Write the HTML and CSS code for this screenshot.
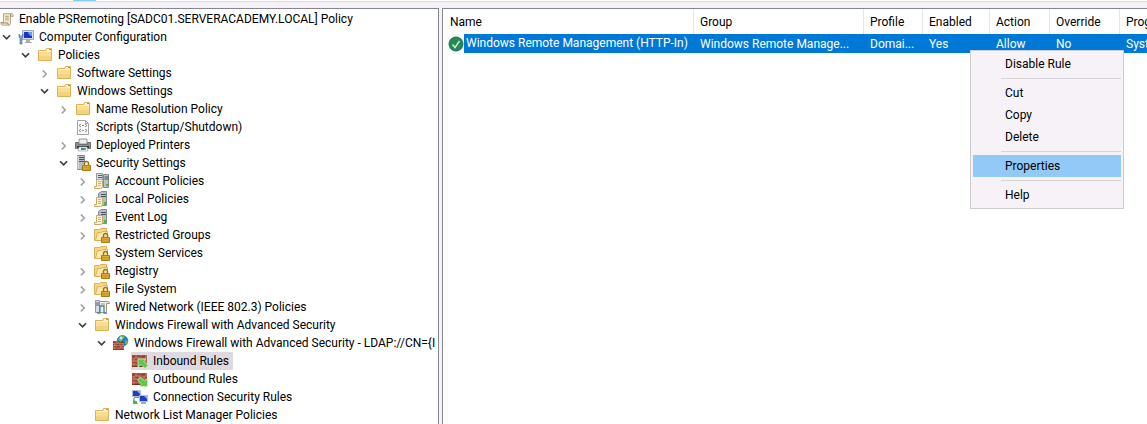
FILE: index.html
```html
<!DOCTYPE html>
<html lang="en">
<head>
    <meta charset="UTF-8">
    <meta name="viewport" content="width=device-width, initial-scale=1.0">
    <title>Group Policy Management Editor</title>
    <link rel="stylesheet" href="styles.css">
</head>
<body>
    <!-- Icon set -->
    <svg class="sprite" aria-hidden="true">
        <symbol id="open" viewBox="0 0 16 16"><path d="M3.500 6l4 4 4-4" fill="none" stroke="#404040" stroke-width="2"/></symbol>
        <symbol id="closed" viewBox="0 0 16 16"><path d="M5.500 5l4 4-4 4" fill="none" stroke="#a6a6a6" stroke-width="1.800"/></symbol>
        <symbol id="scroll" viewBox="0 0 16 16">
            <path d="M4 2h9q2 0 2 2v1h-3v8q0 2-2 2H3q-2 0-2-2v-1h3z" fill="#f3e9c9" stroke="#a99b76"/>
            <path d="M12 5V3.500q0-1.500 1-1.500M1.500 12.500H9v1q0 1 1 1.500" fill="none" stroke="#8d805e"/>
            <path d="M6 5h4M6 7h4M6 9h4" stroke="#a39a80"/>
        </symbol>
        <symbol id="computer" viewBox="0 0 16 16">
            <path d="M4.500 1.500h11v9h-11z" fill="#d9dde4" stroke="#a3a9b5"/>
            <path d="M6 3h8v6H6z" fill="#1437c4"/><path d="M10 3h4v4q-3 0-4-4z" fill="#6d9bf5"/>
            <path d="M8 11h4v2H8zM7 13h7v1H7z" fill="#a6adb8"/>
            <path d="M1 5v3l1 1v6h2V9l1-1V5L4 7H2z" fill="#7fa9cf" stroke="#3e6d99" stroke-width=".6"/>
        </symbol>
        <symbol id="folder" viewBox="0 0 16 16">
            <path d="M1.500 3.500h7l1-2h5v12h-13z" fill="#f8de92" stroke="#d9b25a"/>
            <path d="M10 2h4v1.500h-4z" fill="#fff"/><path d="M12 2h2v1h-2z" fill="#58a2dd"/>
            <path d="M2 4.500h12" stroke="#fdf0c4"/><path d="M2 9h12v4H2z" fill="#eec768" opacity=".5"/>
        </symbol>
        <symbol id="lock" viewBox="0 0 16 16">
            <path d="M9.500 11V8.500a2 2 0 0 1 4 0V11" fill="none" stroke="#a27413" stroke-width="1.500"/>
            <path d="M7.500 10.500h8v5h-8z" fill="#e2ae34" stroke="#a87a18"/><path d="M8 12.500h7M8 14h7" stroke="#c28e20" stroke-width=".7"/>
        </symbol>
        <symbol id="folderlock" viewBox="0 0 16 16">
            <path d="M.5 2.500h5l1-1h6v12H.5z" fill="#f6d77f" stroke="#d9b25a"/>
            <path d="M1.500 13.500l2-8h4l1-1h5v9z" fill="#fae8ae" stroke="#d9b25a"/>
            <use href="#lock"/>
        </symbol>
        <symbol id="script" viewBox="0 0 16 16">
            <path d="M2.500 1.500h8l3 3v11h-11z" fill="#fafafa" stroke="#a3a3a3"/><path d="M10.500 1.500v3h3" fill="none" stroke="#a3a3a3"/>
            <path d="M6 5L4 6.500 6 8M10 5l2 1.500L10 8M6 10l-2 1.500L6 13M10 10l2 1.500-2 1.500M7 6.500h2M7 11.500h2" fill="none" stroke="#707070" stroke-width=".8"/>
        </symbol>
        <symbol id="printer" viewBox="0 0 16 16">
            <path d="M4 2h8v5H4z" fill="#ededf0" stroke="#999"/>
            <path d="M.5 5.500h3v2h9v-2h3v6H.5z" fill="#8b8f95" stroke="#6d7075"/>
            <path d="M2 9h12v2H2z" fill="#37393d"/><path d="M4 10h8l1 4H3z" fill="#f2f5f8" stroke="#999" stroke-width=".6"/>
            <path d="M6 11h3v2H6z" fill="#248bc2"/><path d="M9 11h2v2H9z" fill="#4bb7a6"/>
        </symbol>
        <symbol id="server" viewBox="0 0 16 16">
            <path d="M5.500.5h7v14h-7z" fill="#b5bec8" stroke="#808b97"/>
            <path d="M7 2.500h5M7 4.500h5M7 6.500h5" stroke="#4b5660"/><path d="M6 1v13" stroke="#e7ecf0"/>
        </symbol>
        <symbol id="security" viewBox="0 0 16 16">
            <g transform="translate(-3)"><use href="#server"/></g><use href="#lock"/>
        </symbol>
        <symbol id="note" viewBox="0 0 16 16">
            <path d="M2.500 6.500h6v7q0 2-2 2h-6v-2h2z" fill="#fbf0cf" stroke="#c9ab68"/>
            <path d="M4 8.500h3M4 10.500h3M4 12.500h3" stroke="#b8a475" stroke-width=".8"/>
        </symbol>
        <symbol id="account" viewBox="0 0 16 16">
            <path d="M2.500.5h6v12h-6z" fill="#d5dce2" stroke="#8e99a4"/><path d="M4 2.500h4M4 4.500h4" stroke="#54616e"/>
            <path d="M9.500 1.500h5v13h-5z" fill="#b9c3cc" stroke="#7f8b96"/><path d="M10.500 4h4M10.500 6h4" stroke="#44515e"/>
            <path d="M12 11h2v2h-2z" fill="#39c52f"/><use href="#note"/>
        </symbol>
        <symbol id="policy" viewBox="0 0 16 16">
            <path d="M4.500 2.500l3-2h5v14h-8z" fill="#b5bec8" stroke="#808b97"/><path d="M7 3.500h5M7 5.500h5" stroke="#4b5660"/>
            <path d="M10 11h2v3h-2z" fill="#39c52f"/><use href="#note"/>
        </symbol>
        <symbol id="wired" viewBox="0 0 16 16">
            <path d="M1.500 1.500h4v12h-4z" fill="#d5dce2" stroke="#8e99a4"/><path d="M2 4h3M2 6h3" stroke="#54616e"/>
            <path d="M5.500 2.500h9q1 0 1 2h-3v8q0 1-2 1h-5z" fill="#f4efe0" stroke="#9f987f"/>
            <path d="M3 14h3V7h4v7h3" fill="none" stroke="#4b87a4" stroke-width="1.300"/><path d="M7 5h4" stroke="#999"/>
        </symbol>
        <symbol id="bricks" viewBox="0 0 16 16">
            <path d="M0 2h15v12H0z" fill="#a64b36"/>
            <path d="M0 5h15M0 8h15M0 11h15M4 2v3M9 2v3M14 2v3M2 5v3M7 5v3M12 5v3M4 8v3M9 8v3M14 8v3M2 11v3M7 11v3M12 11v3" stroke="#cf9179" stroke-width=".8"/>
            <path d="M0 4h3M5 7h2M8 4h5M3 10h5M0 13.500h15" stroke="#702a1d" stroke-width=".8"/>
        </symbol>
        <symbol id="firewall" viewBox="0 0 16 16">
            <circle cx="9.500" cy="5.800" r="5.300" fill="#2779cb" stroke="#1b5496" stroke-width=".6"/>
            <path d="M8 1q3-1 4 1l-2 2-2 3-3-2q1-3 3-4zM12 5l3 1-1 4-2-1z" fill="#63bb4c"/><circle cx="8" cy="3" r="1.500" fill="#cbe9f6"/>
            <svg x="0" y="6" width="11" height="9" viewBox="0 2 13 12" preserveAspectRatio="none"><use href="#bricks" width="16" height="16"/></svg>
        </symbol>
        <symbol id="inbound" viewBox="0 0 16 16">
            <use href="#bricks"/><path d="M6 6h8l-2 2.500 4 4-3 3-4-4L6 14z" fill="#55cc43" stroke="#d3f1c5" stroke-width=".8"/>
        </symbol>
        <symbol id="outbound" viewBox="0 0 16 16">
            <use href="#bricks"/><path d="M15.500 15.500h-8l2-2.500-4-4 3-3 4 4 3-2.500z" fill="#55cc43" stroke="#d3f1c5" stroke-width=".8"/>
        </symbol>
        <symbol id="connection" viewBox="0 0 16 16">
            <path d="M.5 1.500h8v6h-8z" fill="#1d3fc6" stroke="#b5bcc9"/><path d="M5 2h3v3z" fill="#8eb0fa"/><path d="M2 8.500h5" stroke="#8790a0"/>
            <path d="M7.500 6.500h8v6h-8z" fill="#1d3fc6" stroke="#b5bcc9"/><path d="M12 7h3v3z" fill="#8eb0fa"/><path d="M9 14h5" stroke="#a3abb8" stroke-width="2"/>
            <path d="M2 9v4h3" fill="none" stroke="#5e6c7a"/><path d="M1 11l3 1 2 3H1z" fill="#54b647"/>
        </symbol>
        <symbol id="check" viewBox="0 0 16 16">
            <circle cx="8" cy="8" r="7" fill="#27894a" stroke="#176b72"/><path d="M4.500 8.500l2.500 3L11.500 5" fill="none" stroke="#cfeee0" stroke-width="1.400"/>
        </symbol>
    </svg>

    <div class="window">
        <div class="toolbar"><span class="toolbar-active"></span></div>
        <main class="panes">
            <nav class="tree" aria-label="Console tree">
                <div class="row root"><a href="#"><svg class="icon"><use href="#scroll"/></svg>Enable PSRemoting [SADC01.SERVERACADEMY.LOCAL] Policy</a></div>
                <ul>
                    <li>
                        <div class="row"><button class="toggle" aria-label="Collapse"><svg class="icon"><use href="#open"/></svg></button><a href="#"><svg class="icon"><use href="#computer"/></svg>Computer Configuration</a></div>
                        <ul>
                            <li>
                                <div class="row"><button class="toggle" aria-label="Collapse"><svg class="icon"><use href="#open"/></svg></button><a href="#"><svg class="icon"><use href="#folder"/></svg>Policies</a></div>
                                <ul>
                                    <li><div class="row"><button class="toggle" aria-label="Expand"><svg class="icon"><use href="#closed"/></svg></button><a href="#"><svg class="icon"><use href="#folder"/></svg>Software Settings</a></div></li>
                                    <li>
                                        <div class="row"><button class="toggle" aria-label="Collapse"><svg class="icon"><use href="#open"/></svg></button><a href="#"><svg class="icon"><use href="#folder"/></svg>Windows Settings</a></div>
                                        <ul>
                                            <li><div class="row"><button class="toggle" aria-label="Expand"><svg class="icon"><use href="#closed"/></svg></button><a href="#"><svg class="icon"><use href="#folder"/></svg>Name Resolution Policy</a></div></li>
                                            <li><div class="row leaf"><a href="#"><svg class="icon"><use href="#script"/></svg>Scripts (Startup/Shutdown)</a></div></li>
                                            <li><div class="row"><button class="toggle" aria-label="Expand"><svg class="icon"><use href="#closed"/></svg></button><a href="#"><svg class="icon"><use href="#printer"/></svg>Deployed Printers</a></div></li>
                                            <li>
                                                <div class="row"><button class="toggle" aria-label="Collapse"><svg class="icon"><use href="#open"/></svg></button><a href="#"><svg class="icon"><use href="#security"/></svg>Security Settings</a></div>
                                                <ul>
                                                    <li><div class="row"><button class="toggle" aria-label="Expand"><svg class="icon"><use href="#closed"/></svg></button><a href="#"><svg class="icon"><use href="#account"/></svg>Account Policies</a></div></li>
                                                    <li><div class="row"><button class="toggle" aria-label="Expand"><svg class="icon"><use href="#closed"/></svg></button><a href="#"><svg class="icon"><use href="#policy"/></svg>Local Policies</a></div></li>
                                                    <li><div class="row"><button class="toggle" aria-label="Expand"><svg class="icon"><use href="#closed"/></svg></button><a href="#"><svg class="icon"><use href="#policy"/></svg>Event Log</a></div></li>
                                                    <li><div class="row"><button class="toggle" aria-label="Expand"><svg class="icon"><use href="#closed"/></svg></button><a href="#"><svg class="icon"><use href="#folderlock"/></svg>Restricted Groups</a></div></li>
                                                    <li><div class="row leaf"><a href="#"><svg class="icon"><use href="#folderlock"/></svg>System Services</a></div></li>
                                                    <li><div class="row"><button class="toggle" aria-label="Expand"><svg class="icon"><use href="#closed"/></svg></button><a href="#"><svg class="icon"><use href="#folderlock"/></svg>Registry</a></div></li>
                                                    <li><div class="row"><button class="toggle" aria-label="Expand"><svg class="icon"><use href="#closed"/></svg></button><a href="#"><svg class="icon"><use href="#folderlock"/></svg>File System</a></div></li>
                                                    <li><div class="row"><button class="toggle" aria-label="Expand"><svg class="icon"><use href="#closed"/></svg></button><a href="#"><svg class="icon"><use href="#wired"/></svg>Wired Network (IEEE 802.3) Policies</a></div></li>
                                                    <li>
                                                        <div class="row"><button class="toggle" aria-label="Collapse"><svg class="icon"><use href="#open"/></svg></button><a href="#"><svg class="icon"><use href="#folder"/></svg>Windows Firewall with Advanced Security</a></div>
                                                        <ul>
                                                            <li>
                                                                <div class="row"><button class="toggle" aria-label="Collapse"><svg class="icon"><use href="#open"/></svg></button><a href="#"><svg class="icon"><use href="#firewall"/></svg>Windows Firewall with Advanced Security - LDAP://CN={I</a></div>
                                                                <ul>
                                                                    <li><div class="row leaf"><a href="#" class="selected"><svg class="icon"><use href="#inbound"/></svg>Inbound Rules</a></div></li>
                                                                    <li><div class="row leaf"><a href="#"><svg class="icon"><use href="#outbound"/></svg>Outbound Rules</a></div></li>
                                                                    <li><div class="row leaf"><a href="#"><svg class="icon"><use href="#connection"/></svg>Connection Security Rules</a></div></li>
                                                                </ul>
                                                            </li>
                                                        </ul>
                                                    </li>
                                                    <li><div class="row leaf"><a href="#"><svg class="icon"><use href="#folder"/></svg>Network List Manager Policies</a></div></li>
                                                </ul>
                                            </li>
                                        </ul>
                                    </li>
                                </ul>
                            </li>
                        </ul>
                    </li>
                </ul>
            </nav>

            <section class="list">
                <table>
                    <colgroup>
                        <col class="col-name"><col class="col-group"><col class="col-profile"><col class="col-enabled"><col class="col-action"><col class="col-override"><col class="col-program">
                    </colgroup>
                    <thead>
                        <tr><th>Name</th><th>Group</th><th>Profile</th><th>Enabled</th><th>Action</th><th>Override</th><th>Program</th></tr>
                    </thead>
                    <tbody>
                        <tr>
                            <td class="name"><div class="name-cell"><svg class="icon"><use href="#check"/></svg><span>Windows Remote Management (HTTP-In)</span></div></td>
                            <td>Windows Remote Manage...</td>
                            <td>Domai...</td>
                            <td>Yes</td>
                            <td>Allow</td>
                            <td>No</td>
                            <td>System</td>
                        </tr>
                    </tbody>
                </table>

                <div class="menu" role="menu">
                    <button role="menuitem">Disable Rule</button>
                    <hr>
                    <button role="menuitem">Cut</button>
                    <button role="menuitem">Copy</button>
                    <button role="menuitem">Delete</button>
                    <hr>
                    <button role="menuitem" class="active">Properties</button>
                    <hr>
                    <button role="menuitem">Help</button>
                </div>
            </section>
        </main>
    </div>
</body>
</html>
```
FILE: styles.css
```css
* {
    box-sizing: border-box;
}

body {
    margin: 0;
    font-family: "Segoe UI", Roboto, "Open Sans", sans-serif;
    font-size: 12px;
    line-height: 18px;
    color: #000;
    background: #f6f2f7;
    overflow: hidden;
}

.sprite {
    display: none;
}

button {
    font: inherit;
    color: inherit;
    background: none;
    border: none;
    padding: 0;
}

.window {
    display: flex;
    flex-direction: column;
    height: 100vh;
}

.toolbar {
    flex: none;
    height: 8px;
    background: linear-gradient(#fff 1px, #dcdcdc 1px, #dcdcdc 2px, #f6f2f7 2px);
}

.toolbar-active {
    display: block;
    width: 23px;
    height: 1px;
    margin-left: 73px;
    background: #84cdf5;
}

.panes {
    flex: 1;
    min-height: 0;
    display: flex;
    gap: 3px;
}

.tree {
    flex: 0 0 439px;
    padding-top: 1px;
    background: #fff;
    border: solid #828790;
    border-width: 1px 1px 0 0;
    overflow: hidden;
    white-space: nowrap;
}

.tree ul {
    list-style: none;
    margin: 0;
    padding: 0;
}

.tree ul ul {
    padding-left: 19px;
}

.row {
    display: flex;
    height: 18px;
}

.row a {
    display: flex;
    align-items: center;
    gap: 5px;
    padding: 0 4px 0 1px;
    color: inherit;
    text-decoration: none;
}

.row.leaf {
    padding-left: 17px;
}

.row a.selected {
    background: #dfdadf;
}

.toggle {
    display: flex;
    align-items: center;
    width: 17px;
    flex: none;
}

.toggle .icon {
    width: 14px;
}

.icon {
    width: 16px;
    height: 16px;
    flex: none;
}

.root a {
    padding-left: 0;
}

.root .icon {
    width: 14px;
}

.list {
    position: relative;
    flex: 1;
    min-width: 0;
    background: #fff;
    border: solid #828790;
    border-width: 1px 0 0 1px;
    overflow: hidden;
}

table {
    table-layout: fixed;
    width: 797px;
    border-collapse: collapse;
}

.col-name { width: 251px; }
.col-group { width: 170px; }
.col-profile { width: 59px; }
.col-enabled { width: 67px; }
.col-action { width: 60px; }
.col-override { width: 70px; }
.col-program { width: 120px; }

th, td {
    padding: 0 0 0 6px;
    text-align: left;
    font-weight: normal;
    white-space: nowrap;
    overflow: hidden;
}

th {
    height: 25px;
    box-shadow: inset -1px 0 #e5e5e5;
}

th:first-child {
    padding-left: 7px;
}

td {
    height: 19px;
    color: #fff;
    background: #0078d7;
}

td.name {
    padding-left: 5px;
    background: none;
}

.name-cell {
    display: flex;
    align-items: center;
}

.name-cell span {
    flex: 1;
    line-height: 19px;
    padding-left: 2px;
    background: #0078d7;
}

.menu {
    position: absolute;
    top: 41px;
    left: 527px;
    width: 154px;
    padding: 2px;
    background: #f6f2f7;
    border: 1px solid #ccc;
}

.menu button {
    display: block;
    width: 100%;
    height: 22px;
    padding-left: 32px;
    text-align: left;
}

.menu .active {
    background: #91c9f7;
}

.menu hr {
    height: 1px;
    margin: 3px 0 3px 28px;
    border: none;
    background: #d5d3d6;
}
```
